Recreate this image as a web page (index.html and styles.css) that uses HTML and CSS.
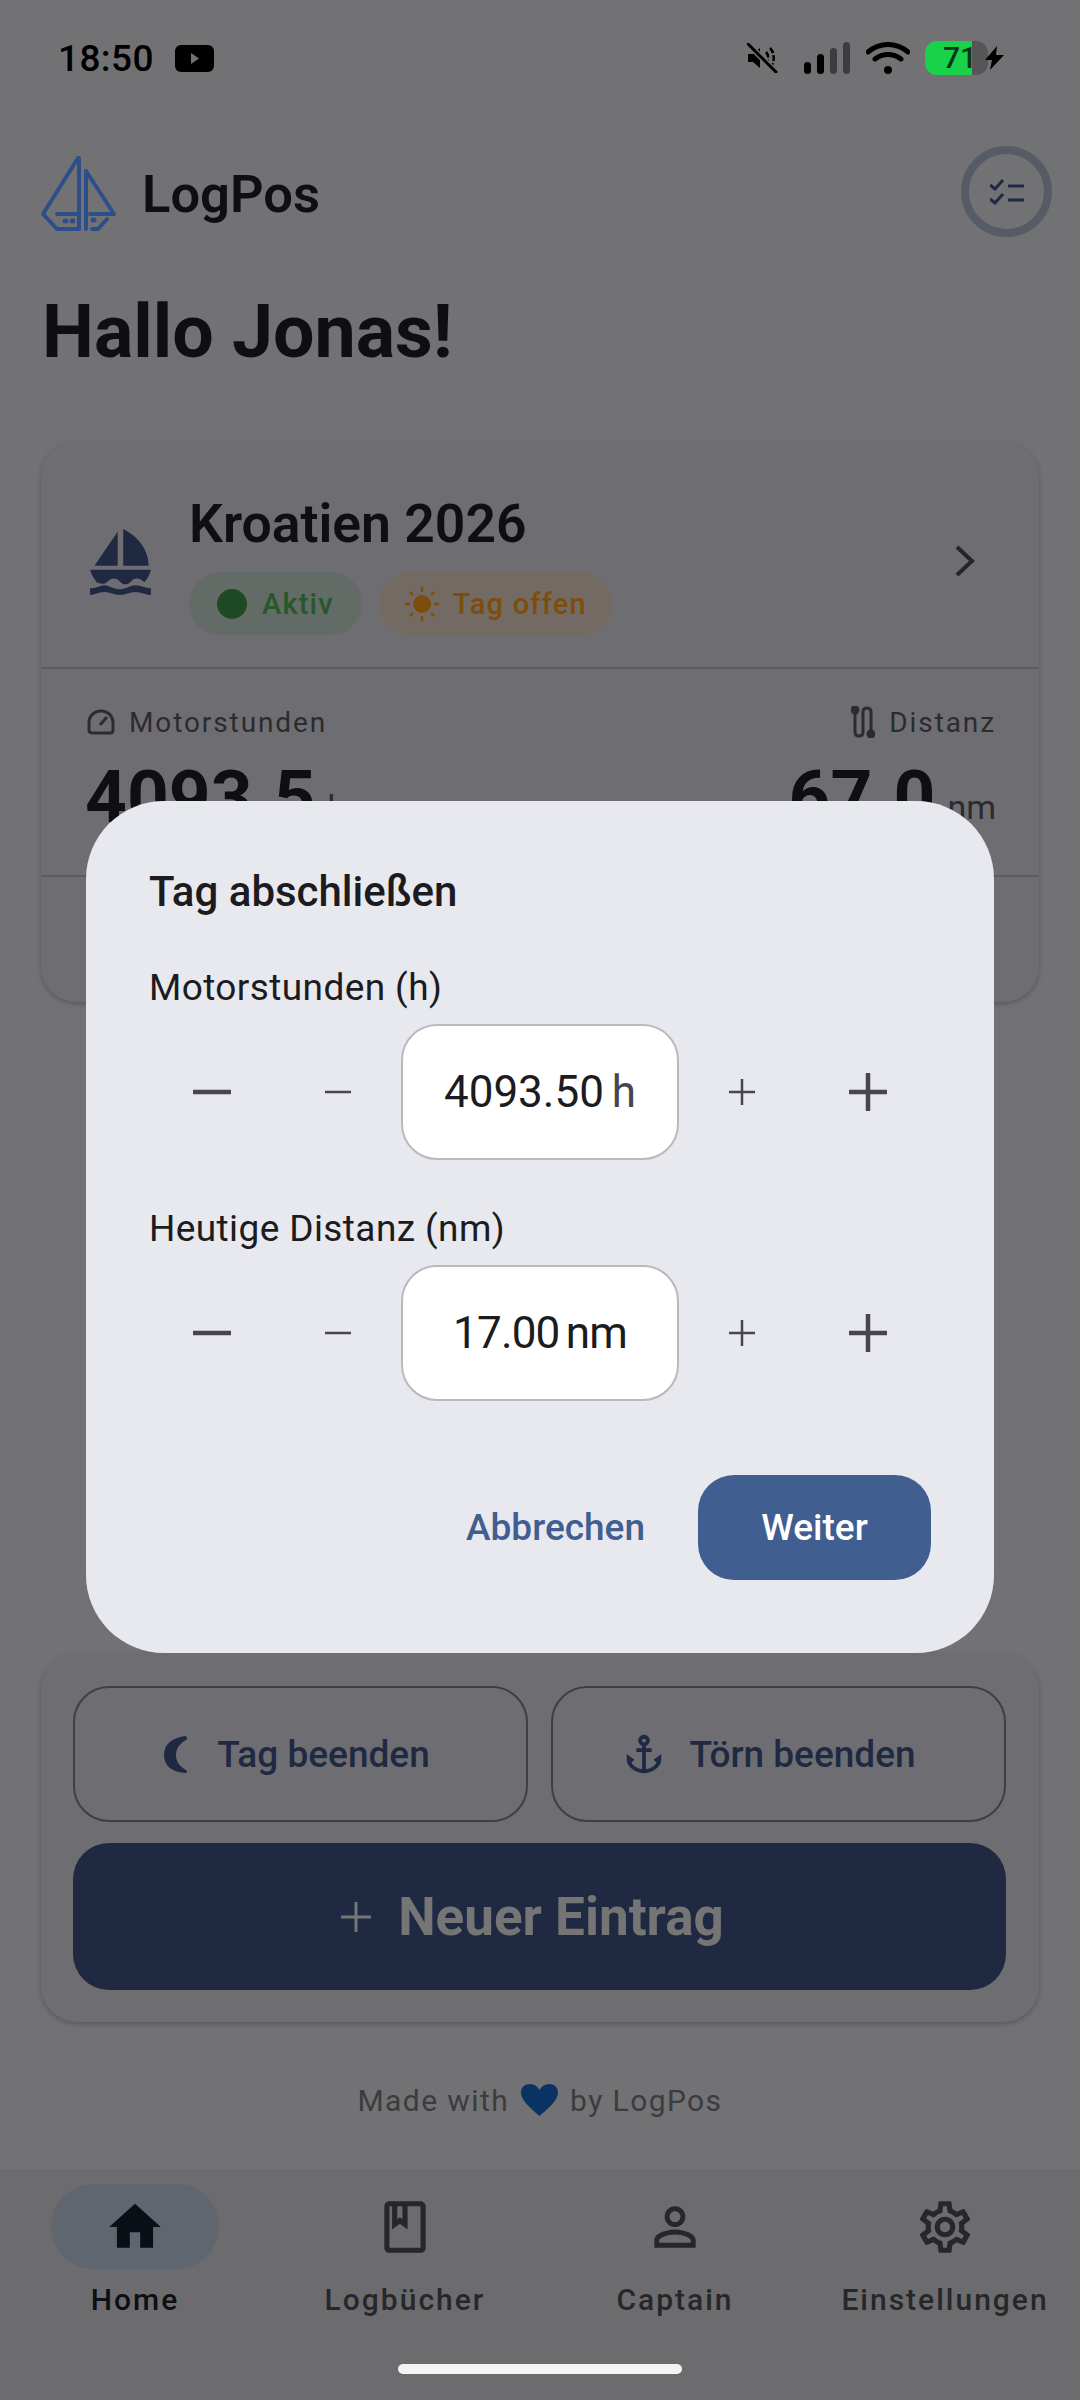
FILE: index.html
```html
<!DOCTYPE html>
<html lang="de">
<head>
  <meta charset="UTF-8">
  <meta name="viewport" content="width=device-width, initial-scale=1.0">
  <title>LogPos</title>
  <link rel="stylesheet" href="styles.css">
</head>
<body>

<div class="screen">
  <div class="status">
    <div class="status-left">
      <span class="time">18:50</span>
      <svg class="yt" viewBox="0 0 39 27"><rect width="39" height="27" rx="6" fill="#000"/><path d="M16 8l8 5.5-8 5.5z" fill="#727274"/></svg>
    </div>
    <div class="status-right">
      <svg class="mute" viewBox="0 0 32 30"><path d="M1 11h5l7-6v20l-7-6H1z" fill="#000"/><path d="M19 9c3 3 3 9 0 12M23 5c5 5 5 15 0 20" fill="none" stroke="#000" stroke-width="2.5" stroke-dasharray="6 2"/><path d="M2 2l27 27" stroke="#727274" stroke-width="6"/><path d="M1 1l28 28" stroke="#000" stroke-width="3" stroke-linecap="round"/></svg>
      <div class="signal"><i class="s1"></i><i class="s2"></i><i class="s3"></i><i class="s4"></i></div>
      <svg class="wifi" viewBox="0 0 44 32"><path d="M2 10c12-10 28-10 40 0M9 17c8-6 18-6 26 0" fill="none" stroke="#000" stroke-width="5" stroke-linecap="round"/><circle cx="22" cy="28" r="4" fill="#000"/></svg>
      <div class="battery">71</div>
      <svg class="bolt" viewBox="0 0 21 24"><path d="M13 0L1 14h7l-2 10 14-15h-8z" fill="#000"/></svg>
    </div>
  </div>

  <div class="page">
    <div class="header">
      <div class="brand">
        <svg class="logo" viewBox="0 0 78 80" fill="none" stroke="#2c4f8a" stroke-width="4" stroke-linecap="round" stroke-linejoin="round">
          <path d="M38 4L3 60l14 15h21M39 4v71M46 17v58M46 17l28 43H50M17 60h19M67 65l-9 10h-6"/>
          <path d="M25 67h1M32 67h1M53 66h1" stroke-width="5"/>
        </svg>
        <span class="brand-name">LogPos</span>
      </div>
      <div class="check-btn">
        <svg viewBox="0 0 34 26" fill="none" stroke="#1f2a42" stroke-width="3"><path d="M0 6l5 4 8-9M0 20l5 4 8-9M18 7h16M18 21h16"/></svg>
      </div>
    </div>

    <h1 class="greeting">Hallo Jonas!</h1>

    <div class="card trip">
      <div class="trip-head">
        <svg class="boat" viewBox="0 0 56 70" preserveAspectRatio="none" fill="#1f2a42"><path d="M25 5L4 40h21zM30 2c14 8 23 22 23 38H30zM0 44h55c-1 5-3 9-6 13-4-5-9-5-12-1-3 4-7 4-10 0-3-4-8-4-11 0-3 4-7 2-10 1-2-4-5-8-6-13zM0 63c5 1 9-3 13-3s8 4 14 4 9-4 14-4 9 3 14 3v7c-5 0-9-3-14-3s-9 3-14 3-9-3-14-3-9 3-13 3z"/></svg>
        <div class="trip-info">
          <div class="trip-title">Kroatien 2026</div>
          <div class="chips">
            <div class="chip chip-green"><span class="dot"></span>Aktiv</div>
            <div class="chip chip-orange">
              <svg class="sun" viewBox="0 0 36 36"><circle cx="18" cy="18" r="9" fill="#7d4d0c"/><path d="M18 1v5M18 30v5M1 18h5M30 18h5M6 6l3 3M27 27l3 3M6 30l3-3M27 9l3-3" stroke="#7d4d0c" stroke-width="2.5"/></svg>
              Tag offen
            </div>
          </div>
        </div>
        <svg class="chevron" viewBox="0 0 20 32" fill="none" stroke="#26262a" stroke-width="4"><path d="M2 2l15 14L2 30"/></svg>
      </div>

      <div class="stats">
        <div class="stat">
          <div class="stat-label">
            <svg class="stat-icon" viewBox="0 0 28 26" fill="none" stroke="#2b2b30" stroke-width="3"><path d="M6 24h17c2 0 3-1 3-3V14C26 7 21 2 14 2S2 7 2 14v7c0 2 1 3 4 3zM13 16l7-8"/></svg>
            Motorstunden
          </div>
          <div class="stat-value">4093.5<span class="unit">h</span></div>
        </div>
        <div class="stat stat-right">
          <div class="stat-label">
            <svg class="stat-icon route" viewBox="0 0 24 32" fill="none" stroke="#2b2b30" stroke-width="3"><circle cx="4" cy="4" r="3" fill="#2b2b30"/><circle cx="20" cy="28" r="3" fill="#2b2b30"/><path d="M4 6v20c0 3 2 4 4 4s4-1 4-4V6c0-3 2-4 4-4s4 1 4 4v20"/></svg>
            Distanz
          </div>
          <div class="stat-value">67.0<span class="unit">nm</span></div>
        </div>
      </div>

      <div class="trip-foot"></div>
    </div>

    <div class="card actions">
      <div class="action-btn">
        <svg class="moon" viewBox="0 0 26 39"><path d="M22 1C8 3 1 10 1 20s7 17 21 18c2 0 3-2 1-3-7-4-10-9-10-15s3-11 10-15c2-1 1-4-1-4z" fill="#1f2a42"/></svg>
        Tag beenden
      </div>
      <div class="action-btn action-right">
        <svg class="anchor" viewBox="0 0 24 24"><path d="M17 15l1.55 1.55c-.96 1.69-3.33 3.04-5.55 3.37V11h3V9h-3V7.82C14.16 7.4 15 6.3 15 5c0-1.65-1.35-3-3-3S9 3.35 9 5c0 1.3.84 2.4 2 2.82V9H8v2h3v8.92c-2.22-.33-4.59-1.68-5.55-3.37L7 15l-4-3v3c0 3.88 4.92 7 9 7s9-3.12 9-7v-3l-4 3zM12 4c.55 0 1 .45 1 1s-.45 1-1 1-1-.45-1-1 .45-1 1-1z" fill="#1f2a42"/></svg>
        Törn beenden
      </div>
      <div class="new-entry">
        <svg class="new-plus" viewBox="0 0 30 30" stroke="#757575" stroke-width="3"><path d="M15 0v30M0 15h30"/></svg>
        Neuer Eintrag
      </div>
    </div>

    <div class="made">Made with
      <svg class="heart" viewBox="0 0 37 32"><path d="M18.5 32C8 23 0 16 0 8.500 0 3 4 0 9 0c4 0 7.500 2 9.500 6C20.500 2 24 0 28 0c5 0 9 3 9 8.500C37 16 29 23 18.500 32z" fill="#0a3262"/></svg>
      by LogPos</div>
  </div>

  <div class="nav">
    <div class="nav-items">
      <div class="nav-item active">
        <div class="nav-pill"><svg viewBox="0 0 24 24"><path d="M10 20v-6h4v6h5v-8h3L12 3 2 12h3v8z"/></svg></div>
        <span>Home</span>
      </div>
      <div class="nav-item">
        <div class="nav-pill"><svg viewBox="0 0 24 24"><path d="M18 2H6c-1.100 0-2 .9-2 2v16c0 1.100.9 2 2 2h12c1.100 0 2-.9 2-2V4c0-1.100-.9-2-2-2zM9 4h2v5l-1-.75L9 9V4zm9 16H6V4h1v9l3-2.250L13 13V4h5v16z"/></svg></div>
        <span>Logbücher</span>
      </div>
      <div class="nav-item">
        <div class="nav-pill"><svg viewBox="0 0 24 24"><path d="M12 5.900c1.160 0 2.100.94 2.100 2.100s-.94 2.100-2.100 2.100S9.900 9.160 9.900 8s.94-2.100 2.100-2.100m0 9c2.970 0 6.100 1.460 6.100 2.100v1.100H5.900V17c0-.64 3.130-2.100 6.100-2.100M12 4C9.790 4 8 5.790 8 8s1.790 4 4 4 4-1.790 4-4-1.790-4-4-4zm0 9c-2.670 0-8 1.340-8 4v3h16v-3c0-2.660-5.330-4-8-4z"/></svg></div>
        <span>Captain</span>
      </div>
      <div class="nav-item">
        <div class="nav-pill"><svg viewBox="0 0 24 24"><path d="M19.430 12.980c.04-.32.07-.64.07-.98 0-.34-.03-.66-.07-.98l2.110-1.650c.19-.15.24-.42.12-.64l-2-3.460c-.09-.16-.26-.25-.44-.25-.06 0-.12.01-.17.03l-2.490 1c-.52-.4-1.080-.73-1.690-.98l-.38-2.650C14.460 2.180 14.250 2 14 2h-4c-.25 0-.46.18-.49.42l-.38 2.650c-.61.25-1.170.59-1.690.98l-2.490-1c-.06-.02-.12-.03-.18-.03-.17 0-.34.09-.43.25l-2 3.460c-.13.22-.07.49.12.64l2.110 1.650c-.04.32-.07.65-.07.98 0 .33.03.66.07.98l-2.110 1.650c-.19.15-.24.42-.12.64l2 3.460c.09.16.26.25.44.25.06 0 .12-.01.17-.03l2.490-1c.52.4 1.080.73 1.690.98l.38 2.650c.03.24.24.42.49.42h4c.25 0 .46-.18.49-.42l.38-2.650c.61-.25 1.170-.59 1.690-.98l2.490 1c.06.02.12.03.18.03.17 0 .34-.09.43-.25l2-3.460c.12-.22.07-.49-.12-.64l-2.110-1.650zm-1.980-1.710c.04.31.05.52.05.73 0 .21-.02.43-.05.73l-.14 1.130.89.7 1.080.84-.7 1.210-1.270-.51-1.040-.42-.9.68c-.43.32-.84.56-1.250.73l-1.060.43-.16 1.130-.2 1.350h-1.400l-.19-1.350-.16-1.130-1.060-.43c-.43-.18-.83-.41-1.230-.71l-.91-.7-1.060.43-1.270.51-.7-1.210 1.080-.84.89-.7-.14-1.130c-.03-.31-.05-.54-.05-.74s.02-.43.05-.73l.14-1.130-.89-.7-1.080-.84.7-1.210 1.270.51 1.040.42.9-.68c.43-.32.84-.56 1.250-.73l1.060-.43.16-1.130.2-1.350h1.390l.19 1.350.16 1.130 1.060.43c.43.18.83.41 1.230.71l.91.7 1.060-.43 1.270-.51.7 1.210-1.070.85-.89.7.14 1.130zM12 8c-2.210 0-4 1.790-4 4s1.790 4 4 4 4-1.790 4-4-1.790-4-4-4zm0 6c-1.100 0-2-.9-2-2s.9-2 2-2 2 .9 2 2-.9 2-2 2z"/></svg></div>
        <span>Einstellungen</span>
      </div>
    </div>
    <div class="home-bar"></div>
  </div>

  <!-- Dialog ueber dem abgedunkelten Inhalt -->
  <div class="dialog">
    <div class="dialog-title">Tag abschließen</div>

    <div class="field-label first">Motorstunden (h)</div>
    <div class="stepper">
      <div class="step"><svg class="big" viewBox="0 0 38 38"><path d="M0 19h38" stroke-width="4.500"/></svg></div>
      <div class="step"><svg class="small" viewBox="0 0 26 26"><path d="M0 13h26" stroke-width="2.500"/></svg></div>
      <div class="step-value">4093.50 <span class="value-unit">h</span></div>
      <div class="step"><svg class="small" viewBox="0 0 26 26"><path d="M0 13h26M13 0v26" stroke-width="2.500"/></svg></div>
      <div class="step"><svg class="big" viewBox="0 0 38 38"><path d="M0 19h38M19 0v38" stroke-width="4.500"/></svg></div>
    </div>

    <div class="field-label">Heutige Distanz (nm)</div>
    <div class="stepper">
      <div class="step"><svg class="big" viewBox="0 0 38 38"><path d="M0 19h38" stroke-width="4.500"/></svg></div>
      <div class="step"><svg class="small" viewBox="0 0 26 26"><path d="M0 13h26" stroke-width="2.500"/></svg></div>
      <div class="step-value tight">17.00 nm</div>
      <div class="step"><svg class="small" viewBox="0 0 26 26"><path d="M0 13h26M13 0v26" stroke-width="2.500"/></svg></div>
      <div class="step"><svg class="big" viewBox="0 0 38 38"><path d="M0 19h38M19 0v38" stroke-width="4.500"/></svg></div>
    </div>

    <div class="dialog-actions">
      <div class="btn-text">Abbrechen</div>
      <div class="btn-primary">Weiter</div>
    </div>
  </div>
</div>

</body>
</html>
```

FILE: styles.css
```css
* {
  box-sizing: border-box;
}
body {
  margin: 0;
  font-family: Roboto, "Noto Sans", sans-serif;
  background: #727274;
  color: #0e0f11;
}
.screen {
  position: relative;
  width: 1080px;
  height: 2400px;
  display: flex;
  flex-direction: column;
  overflow: hidden;
  background: #727274;
}

/* status bar */
.status {
  height: 116px;
  flex: none;
  display: flex;
  justify-content: space-between;
  align-items: center;
  padding: 0 75px 0 58px;
}
.status-left, .status-right {
  display: flex;
  align-items: center;
}
.time {
  font-size: 37px;
  font-weight: 500;
  letter-spacing: 0.4px;
  color: #000;
}
.yt {
  width: 39px;
  height: 27px;
  margin-left: 21px;
}
.mute {
  width: 32px;
  height: 30px;
  margin-right: 25px;
}
.signal {
  display: flex;
  align-items: flex-end;
  gap: 6px;
  height: 32px;
  margin-right: 16px;
}
.signal i {
  width: 7px;
  border-radius: 4px;
  background: #000;
}
.s1 { height: 12px; }
.s2 { height: 20px; }
.s3 { height: 26px; background: #3d3d3f !important; }
.s4 { height: 32px; background: #3d3d3f !important; }
.wifi {
  width: 44px;
  height: 32px;
  margin-right: 15px;
}
.battery {
  width: 63px;
  height: 34px;
  padding-left: 18px;
  border-radius: 12px;
  background: linear-gradient(90deg, #19d24a 47px, #565658 47px);
  font-size: 30px;
  font-weight: 500;
  line-height: 34px;
  color: #06351a;
}
.bolt {
  width: 21px;
  height: 24px;
  margin-left: -4px;
}

/* main column */
.page {
  padding: 0 41px;
  flex: 1;
}
.header {
  margin-top: 30px;
  display: flex;
  justify-content: space-between;
  align-items: center;
  height: 91px;
}
.brand {
  display: flex;
  align-items: center;
}
.logo {
  width: 78px;
  height: 80px;
  margin-right: 25px;
  margin-left: -1px;
  margin-top: 5px;
}
.brand-name {
  font-size: 52.5px;
  font-weight: 600;
  margin-left: -1px;
  padding-top: 4px;
}
.check-btn {
  width: 91px;
  height: 91px;
  margin-right: -13px;
  border: 8px solid #565b66;
  border-radius: 50%;
  display: flex;
  justify-content: center;
  align-items: center;
}
.check-btn svg {
  width: 34px;
  height: 26px;
}
.greeting {
  margin: 53px 0 0 1px;
  font-size: 73.5px;
  font-weight: 700;
  line-height: 84px;
}

.card {
  width: 998px;
  background: #6e6e72;
  border-radius: 36px;
  box-shadow: 0 2px 5px rgba(0, 0, 0, 0.22);
}
.trip {
  margin-top: 67px;
  height: 561px;
}
.trip-head {
  height: 226px;
  padding: 53px 46px 32px 49px;
  display: flex;
  align-items: center;
}
.boat {
  width: 62px;
  height: 68px;
  margin: 0 37px 8px 0;
}
.trip-info {
  flex: 1;
}
.trip-title {
  font-size: 53.5px;
  font-weight: 600;
  line-height: 60px;
}
.chips {
  margin-top: 18px;
  display: flex;
  gap: 16px;
}
.chip {
  height: 63px;
  padding: 0 28px;
  border-radius: 32px;
  display: flex;
  align-items: center;
  font-size: 29px;
  font-weight: 500;
  letter-spacing: 1.2px;
}
.chip-green {
  background: #636b66;
  color: #27582b;
}
.chip-orange {
  padding: 0 26px;
  background: #736b63;
  color: #7d4d0c;
}
.dot {
  width: 30px;
  height: 30px;
  margin-right: 15px;
  border-radius: 50%;
  background: #1f4a24;
}
.sun {
  width: 36px;
  height: 36px;
  margin-right: 13px;
}
.chevron {
  width: 20px;
  height: 32px;
  margin: 0 18px 8px 0;
}
.stats {
  height: 210px;
  border-top: 2px solid #5c5c61;
  border-bottom: 2px solid #5c5c61;
  padding: 35px 43px 0 44px;
  display: flex;
  justify-content: space-between;
}
.stat-label {
  display: flex;
  align-items: center;
  gap: 14px;
  height: 36px;
  padding-left: 2px;
  font-size: 28px;
  letter-spacing: 1.9px;
  color: #2b2b30;
}
.stat-right .stat-label {
  justify-content: flex-end;
}
.stat-icon {
  width: 28px;
  height: 26px;
}
.stat-icon.route {
  width: 24px;
  height: 32px;
}
.stat-value {
  margin-top: 13px;
  font-size: 73px;
  font-weight: 700;
  line-height: 88px;
}
.unit {
  margin-left: 12px;
  font-size: 34px;
  font-weight: 400;
  color: #2b2b30;
  vertical-align: 3px;
}

.actions {
  margin-top: 651px;
  height: 369px;
  padding: 33px 33px 33px 32px;
  display: grid;
  grid-template-columns: 1fr 1fr;
  grid-template-rows: 136px 147px;
  gap: 21px 23px;
}
.action-btn {
  padding-right: 8px;
  border: 2px solid #3e3e44;
  border-radius: 36px;
  display: flex;
  justify-content: center;
  align-items: center;
  gap: 28px;
  font-size: 37px;
  font-weight: 500;
  color: #1f2a42;
}
.action-right {
  padding-right: 20px;
}
.moon {
  width: 26px;
  height: 39px;
}
.anchor {
  width: 46px;
  height: 46px;
  margin-right: -6px;
}
.new-entry {
  grid-column: 1 / span 2;
  padding-right: 14px;
  background: #1f2a42;
  border-radius: 36px;
  display: flex;
  justify-content: center;
  align-items: center;
  gap: 27px;
  font-size: 53px;
  font-weight: 700;
  color: #757575;
}
.new-plus {
  width: 30px;
  height: 30px;
}
.made {
  margin-top: 58px;
  height: 40px;
  display: flex;
  justify-content: center;
  align-items: center;
  gap: 12px;
  font-size: 30px;
  letter-spacing: 1.4px;
  color: #3c3c40;
}
.heart {
  width: 37px;
  height: 32px;
}

/* bottom navigation */
.nav {
  height: 231px;
  flex: none;
  padding-top: 15px;
  background: #6c6c6e;
}
.nav-items {
  display: grid;
  grid-template-columns: repeat(4, 270px);
}
.nav-item {
  display: flex;
  flex-direction: column;
  align-items: center;
  font-size: 30px;
  font-weight: 500;
  letter-spacing: 2px;
  line-height: 36px;
  color: #26272b;
}
.nav-pill {
  width: 168px;
  height: 85px;
  margin-bottom: 13px;
  border-radius: 43px;
  display: flex;
  justify-content: center;
  align-items: center;
}
.nav-pill svg {
  width: 62px;
  height: 62px;
  fill: #26272b;
}
.nav-item.active {
  color: #0c0f14;
}
.active .nav-pill {
  background: #5f6670;
}
.active .nav-pill svg {
  fill: #0a0f16;
}
.home-bar {
  width: 284px;
  height: 10px;
  margin: 46px auto 0;
  border-radius: 5px;
  background: #f4f4f4;
}

/* dialog */
.dialog {
  position: absolute;
  left: 86px;
  top: 801px;
  width: 908px;
  height: 852px;
  padding: 67px 63px 0 63px;
  border-radius: 78px;
  background: #e8e8ef;
  color: #1b1b20;
}
.dialog-title {
  font-size: 42px;
  font-weight: 500;
  line-height: 48px;
}
.field-label {
  margin-top: 47px;
  font-size: 37px;
  line-height: 44px;
  letter-spacing: 0.4px;
}
.field-label.first {
  margin-top: 50px;
}
.stepper {
  margin-top: 14px;
  display: flex;
  align-items: center;
}
.step {
  flex: 1;
  display: flex;
  justify-content: center;
}
.step svg {
  stroke: #46464c;
  fill: none;
}
.step .big {
  width: 38px;
  height: 38px;
}
.step .small {
  width: 26px;
  height: 26px;
}
.step-value {
  width: 278px;
  height: 136px;
  background: #fff;
  border: 2px solid #b9b9be;
  border-radius: 36px;
  display: flex;
  justify-content: center;
  align-items: center;
  font-size: 44px;
  white-space: pre;
  word-spacing: -3px;
}
.step-value.tight {
  letter-spacing: -0.8px;
  word-spacing: -4px;
}
.value-unit {
  color: #46464c;
}
.dialog-actions {
  margin-top: 74px;
  display: flex;
  justify-content: flex-end;
  align-items: center;
  gap: 53px;
}
.btn-text {
  font-size: 37px;
  font-weight: 500;
  color: #415e90;
}
.btn-primary {
  width: 233px;
  height: 105px;
  border-radius: 36px;
  background: #415e90;
  display: flex;
  justify-content: center;
  align-items: center;
  font-size: 37px;
  font-weight: 500;
  color: #fff;
}
```
